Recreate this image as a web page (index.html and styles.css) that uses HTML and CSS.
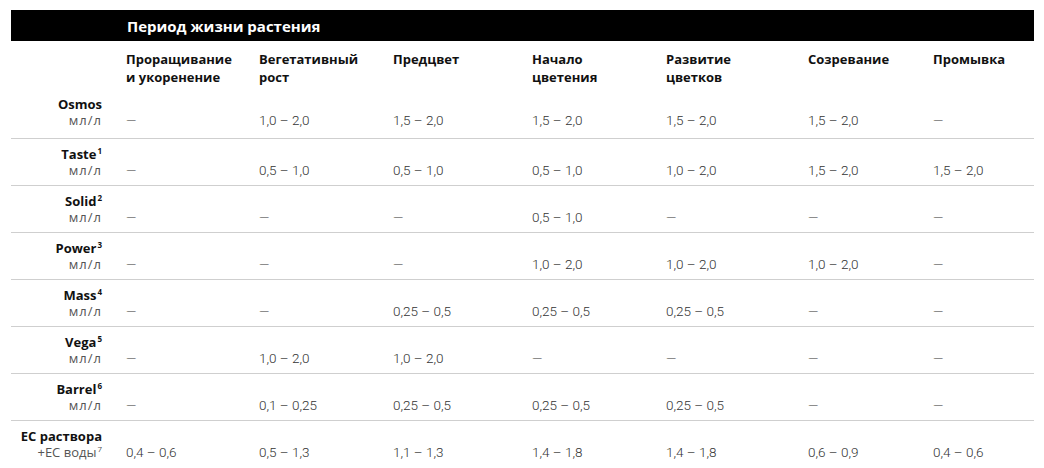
FILE: index.html
```html
<!DOCTYPE html>
<html lang="ru">
<head>
<meta charset="utf-8">
<title>Период жизни растения</title>
<link rel="stylesheet" href="styles.css">
</head>
<body>
<div class="page">
  <div class="bar"><span class="bar-title">Период жизни растения</span></div>
  <div class="row head">
    <div class="label"></div>
    <div class="hcell">Проращивание<br>и укоренение</div>
    <div class="hcell">Вегетативный<br>рост</div>
    <div class="hcell">Предцвет</div>
    <div class="hcell">Начало<br>цветения</div>
    <div class="hcell">Развитие<br>цветков</div>
    <div class="hcell">Созревание</div>
    <div class="hcell">Промывка</div>
  </div>
  <div class="row line first">
    <div class="label"><span class="name">Osmos</span><span class="unit">мл/л</span></div>
    <div class="val">—</div><div class="val">1,0 – 2,0</div><div class="val">1,5 – 2,0</div><div class="val">1,5 – 2,0</div><div class="val">1,5 – 2,0</div><div class="val">1,5 – 2,0</div><div class="val">—</div>
  </div>
  <div class="row line">
    <div class="label"><span class="name">Taste<sup class="note">1</sup></span><span class="unit">мл/л</span></div>
    <div class="val">—</div><div class="val">0,5 – 1,0</div><div class="val">0,5 – 1,0</div><div class="val">0,5 – 1,0</div><div class="val">1,0 – 2,0</div><div class="val">1,5 – 2,0</div><div class="val">1,5 – 2,0</div>
  </div>
  <div class="row line">
    <div class="label"><span class="name">Solid<sup class="note">2</sup></span><span class="unit">мл/л</span></div>
    <div class="val">—</div><div class="val">—</div><div class="val">—</div><div class="val">0,5 – 1,0</div><div class="val">—</div><div class="val">—</div><div class="val">—</div>
  </div>
  <div class="row line">
    <div class="label"><span class="name">Power<sup class="note">3</sup></span><span class="unit">мл/л</span></div>
    <div class="val">—</div><div class="val">—</div><div class="val">—</div><div class="val">1,0 – 2,0</div><div class="val">1,0 – 2,0</div><div class="val">1,0 – 2,0</div><div class="val">—</div>
  </div>
  <div class="row line">
    <div class="label"><span class="name">Mass<sup class="note">4</sup></span><span class="unit">мл/л</span></div>
    <div class="val">—</div><div class="val">—</div><div class="val">0,25 – 0,5</div><div class="val">0,25 – 0,5</div><div class="val">0,25 – 0,5</div><div class="val">—</div><div class="val">—</div>
  </div>
  <div class="row line">
    <div class="label"><span class="name">Vega<sup class="note">5</sup></span><span class="unit">мл/л</span></div>
    <div class="val">—</div><div class="val">1,0 – 2,0</div><div class="val">1,0 – 2,0</div><div class="val">—</div><div class="val">—</div><div class="val">—</div><div class="val">—</div>
  </div>
  <div class="row line">
    <div class="label"><span class="name">Barrel<sup class="note">6</sup></span><span class="unit">мл/л</span></div>
    <div class="val">—</div><div class="val">0,1 – 0,25</div><div class="val">0,25 – 0,5</div><div class="val">0,25 – 0,5</div><div class="val">0,25 – 0,5</div><div class="val">—</div><div class="val">—</div>
  </div>
  <div class="row last">
    <div class="label"><span class="name">EC раствора</span><span class="unit unit-ec">+EC воды<sup class="note">7</sup></span></div>
    <div class="val">0,4 – 0,6</div><div class="val">0,5 – 1,3</div><div class="val">1,1 – 1,3</div><div class="val">1,4 – 1,8</div><div class="val">1,4 – 1,8</div><div class="val">0,6 – 0,9</div><div class="val">0,4 – 0,6</div>
  </div>
</div>
</body>
</html>
```

FILE: styles.css
```css
* { box-sizing: border-box; }
html, body { margin: 0; padding: 0; background: #fff; }
body {
  font-family: Roboto, "Liberation Sans", Arial, sans-serif;
  color: #222;
}
.page {
  width: 1023px;
  margin: 10px 0 0 11px;
}
.bar {
  background: #000;
  height: 31px;
  padding-left: 116px;
  display: flex;
  align-items: center;
}
.bar-title {
  color: #fff;
  font-family: "Open Sans", Roboto, sans-serif;
  font-weight: 700;
  font-size: 15px;
}
.row {
  display: grid;
  grid-template-columns: 115px 133px 134px 139px 134px 142px 125px 1fr;
}
.head {
  padding-top: 9px;
  padding-bottom: 3px;
}
.hcell {
  font-family: "Open Sans", Roboto, sans-serif;
  font-weight: 700;
  font-size: 13px;
  line-height: 18px;
  color: #111;
}
.line {
  border-bottom: 1px solid #cfcfcf;
  padding: 7px 0 7px;
}
.first {
  padding-bottom: 10px;
}
.last {
  padding: 7px 0 7px;
}
.label {
  display: flex;
  flex-direction: column;
  align-items: flex-end;
  padding-right: 24px;
  line-height: 16px;
  font-size: 13px;
}
.name {
  font-family: "Open Sans", Roboto, sans-serif;
  font-weight: 700;
  color: #111;
}
.unit {
  font-family: "Open Sans", Roboto, sans-serif;
  color: #555;
  font-weight: 400;
  letter-spacing: 1px;
}
.unit-ec {
  letter-spacing: 0;
}
.note {
  font-size: 8px;
  line-height: 0;
  vertical-align: 5px;
  margin-left: 1px;
  letter-spacing: 0;
}
.val {
  align-self: end;
  font-size: 13.5px;
  line-height: 16px;
  font-weight: 300;
  color: #333;
}
```
